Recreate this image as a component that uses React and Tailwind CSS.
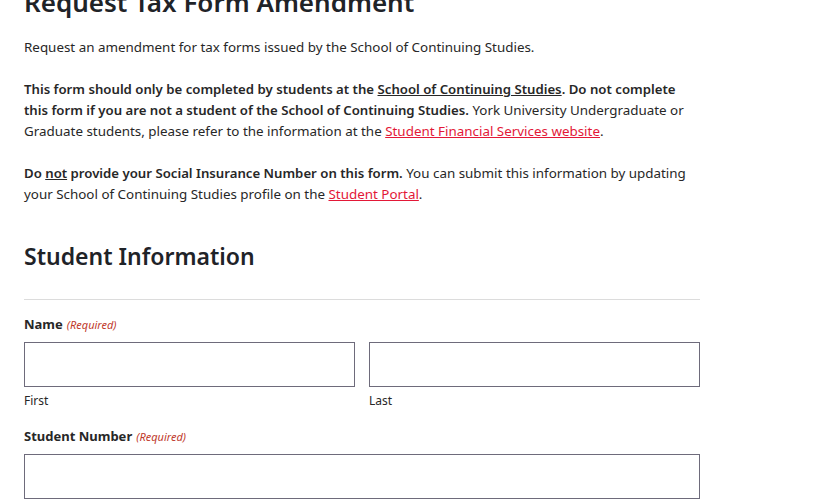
import { useState } from "react";

const font = { fontFamily: '"Noto Sans", "Open Sans", Arial, sans-serif' };

function Required() {
  return <span className="ml-1 text-[11px] font-normal italic text-[#c0392b]">(Required)</span>;
}

function Field({ value, onChange }) {
  return (
    <input
      type="text"
      value={value}
      onChange={(e) => onChange(e.target.value)}
      className="block h-[45px] w-full border border-[#6e6b7b] bg-white px-3 text-sm focus:outline-none"
    />
  );
}

export default function App() {
  const [first, setFirst] = useState("");
  const [last, setLast] = useState("");
  const [studentNo, setStudentNo] = useState("");

  return (
    <div className="min-h-screen overflow-hidden bg-white px-6 text-[#272727]" style={font}>
      <div className="w-[676px]">
        {/* Page title */}
        <h1 className="-mt-[15px] text-[26px] font-semibold leading-[34px] text-[#1f2328]">
          Request Tax Form Amendment
        </h1>

        <p className="mt-[18px] text-[13.4px] leading-[21px]">
          Request an amendment for tax forms issued by the School of Continuing Studies.
        </p>

        <p className="mt-[21px] text-[13.4px] leading-[21px]">
          <strong className="text-[13.2px] font-semibold">
            This form should only be completed by students at the{" "}
            <a href="#" className="underline">School of Continuing Studies</a>. Do not complete this
            form if you are not a student of the School of Continuing Studies.
          </strong>{" "}
          York University Undergraduate or Graduate students, please refer to the information at the{" "}
          <a href="#" className="text-[#e31837] underline">Student Financial Services website</a>.
        </p>

        <p className="mt-[21px] text-[13.4px] leading-[21px]">
          <strong className="text-[13.2px] font-semibold">
            Do <span className="underline">not</span> provide your Social Insurance Number on this form.
          </strong>{" "}
          You can submit this information by updating your School of Continuing Studies profile on the{" "}
          <a href="#" className="text-[#e31837] underline">Student Portal</a>.
        </p>

        {/* Student information section */}
        <h2 className="mt-[35px] text-[23px] font-semibold leading-[32px] text-[#1f2328]">
          Student Information
        </h2>
        <hr className="mt-[27px] border-t border-[#dcdcdc]" />

        <div className="mt-[15px]">
          <label className="block text-[13px] font-bold leading-[18px]">
            Name
            <Required />
          </label>
          <div className="mt-[8px] grid grid-cols-2 gap-[14px]">
            <div>
              <Field value={first} onChange={setFirst} />
              <div className="mt-[6px] text-[12px] leading-[16px]">First</div>
            </div>
            <div>
              <Field value={last} onChange={setLast} />
              <div className="mt-[6px] text-[12px] leading-[16px]">Last</div>
            </div>
          </div>
        </div>

        <div className="mt-[18px]">
          <label className="block text-[13px] font-bold leading-[18px]">
            Student Number
            <Required />
          </label>
          <div className="mt-[8px]">
            <Field value={studentNo} onChange={setStudentNo} />
          </div>
        </div>
      </div>
    </div>
  );
}
